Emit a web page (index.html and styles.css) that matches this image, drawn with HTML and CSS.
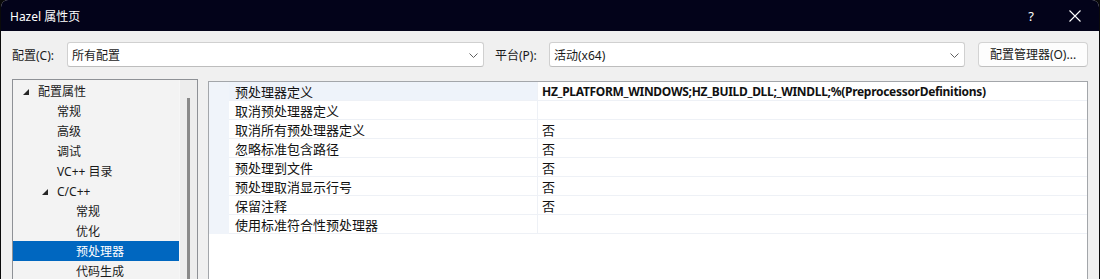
FILE: index.html
```html
<!DOCTYPE html>
<html lang="zh-CN">
<head>
<meta charset="utf-8">
<title>Hazel 属性页</title>
<link rel="stylesheet" href="styles.css">
</head>
<body>
<div class="window">
  <div class="titlebar">
    <span class="title">Hazel 属性页</span>
    <span class="tb-help">?</span>
    <span class="tb-close">
      <svg width="12" height="12" viewBox="0 0 12 12"><path d="M0.5 0.5 L11.5 11.5 M11.5 0.5 L0.5 11.5" stroke="#ffffff" stroke-width="1.1" fill="none"/></svg>
    </span>
  </div>

  <div class="toolbar">
    <span class="label lbl-config">配置(C):</span>
    <div class="combo combo-config">
      <span class="combo-text">所有配置</span>
      <svg class="chev" width="9" height="5" viewBox="0 0 9 5"><path d="M0.5 0.5 L4.5 4.5 L8.5 0.5" stroke="#606060" stroke-width="1" fill="none"/></svg>
    </div>
    <span class="label lbl-platform">平台(P):</span>
    <div class="combo combo-platform">
      <span class="combo-text">活动(x64)</span>
      <svg class="chev" width="9" height="5" viewBox="0 0 9 5"><path d="M0.5 0.5 L4.5 4.5 L8.5 0.5" stroke="#606060" stroke-width="1" fill="none"/></svg>
    </div>
    <button class="btn">配置管理器(O)...</button>
  </div>

  <div class="main">
    <div class="tree">
      <div class="tree-list">
        <div class="node lvl1"><svg class="tri" width="6" height="6" viewBox="0 0 6 6"><polygon points="6,0 6,6 0,6" fill="#262626"/></svg><span>配置属性</span></div>
        <div class="node lvl2"><span>常规</span></div>
        <div class="node lvl2"><span>高级</span></div>
        <div class="node lvl2"><span>调试</span></div>
        <div class="node lvl2"><span>VC++ 目录</span></div>
        <div class="node lvl2 has-tri"><svg class="tri" width="6" height="6" viewBox="0 0 6 6"><polygon points="6,0 6,6 0,6" fill="#262626"/></svg><span>C/C++</span></div>
        <div class="node lvl3"><span>常规</span></div>
        <div class="node lvl3"><span>优化</span></div>
        <div class="node lvl3 selected"><span>预处理器</span></div>
        <div class="node lvl3"><span>代码生成</span></div>
      </div>
      <div class="tree-scroll"><div class="thumb"></div></div>
    </div>

    <div class="grid">
      <div class="row active"><div class="gutter"></div><div class="name">预处理器定义</div><div class="value bold">HZ_PLATFORM_WINDOWS;HZ_BUILD_DLL;_WINDLL;%(PreprocessorDefinitions)</div></div>
      <div class="row"><div class="gutter"></div><div class="name">取消预处理器定义</div><div class="value"></div></div>
      <div class="row"><div class="gutter"></div><div class="name">取消所有预处理器定义</div><div class="value">否</div></div>
      <div class="row"><div class="gutter"></div><div class="name">忽略标准包含路径</div><div class="value">否</div></div>
      <div class="row"><div class="gutter"></div><div class="name">预处理到文件</div><div class="value">否</div></div>
      <div class="row"><div class="gutter"></div><div class="name">预处理取消显示行号</div><div class="value">否</div></div>
      <div class="row"><div class="gutter"></div><div class="name">保留注释</div><div class="value">否</div></div>
      <div class="row"><div class="gutter"></div><div class="name">使用标准符合性预处理器</div><div class="value"></div></div>
    </div>
  </div>
</div>
</body>
</html>
```

FILE: styles.css
```css
* { box-sizing: border-box; }

html, body {
  margin: 0;
  padding: 0;
  background: #0a0a0a;
}

body {
  width: 1100px;
  height: 279px;
  overflow: hidden;
  font-family: "Noto Sans", "Noto Sans CJK SC", sans-serif;
  font-size: 12px;
  color: #1a1a1a;
}

.window {
  width: 1098px;
  height: 279px;
  margin-left: 1px;
  background: #f0f0f0;
  border-radius: 7px 7px 0 0;
  overflow: hidden;
  display: flex;
  flex-direction: column;
}

.titlebar {
  height: 31px;
  flex: none;
  background: #03031a;
  display: flex;
  align-items: center;
  padding-left: 9px;
  color: #ffffff;
}

.title {
  font-size: 12px;
  flex: 1;
  padding-top: 1px;
}

.tb-help {
  font-size: 13px;
  width: 40px;
  text-align: center;
  margin-right: 1px;
}

.tb-close {
  width: 46px;
  display: flex;
  justify-content: center;
  margin-right: 1px;
}

.toolbar {
  display: flex;
  align-items: center;
  height: 25px;
  margin-top: 11px;
  padding-left: 11px;
}

.label {
  font-size: 12px;
  color: #1a1a1a;
}

.lbl-config { width: 55px; }
.lbl-platform { margin-left: 11px; width: 54px; }

.combo {
  height: 25px;
  background: #ffffff;
  border: 1px solid #d0d0d0;
  border-bottom-color: #bdbdbd;
  border-radius: 3px;
  display: flex;
  align-items: center;
  padding-left: 4px;
  padding-right: 5px;
}

.combo-config { width: 417px; }
.combo-platform { width: 416px; }

.combo-text {
  flex: 1;
  font-size: 12px;
  color: #1a1a1a;
}

.chev { margin-top: 1px; }

.btn {
  margin-left: 13px;
  width: 110px;
  height: 25px;
  margin-top: -1px;
  background: #fdfdfd;
  border: 1px solid #d3d3d3;
  border-bottom-color: #c0c0c0;
  border-radius: 4px;
  font-family: "Noto Sans", "Noto Sans CJK SC", sans-serif;
  font-size: 12px;
  color: #1a1a1a;
  padding: 0;
}

.main {
  flex: 1;
  display: flex;
  align-items: flex-start;
  margin-top: 12px;
  padding-left: 11px;
}

.tree {
  width: 186px;
  height: 220px;
  border: 1px solid #8e9196;
  display: flex;
  background: #f3f3f3;
}

.tree-list {
  width: 166px;
  padding-top: 1px;
}

.node {
  height: 20px;
  display: flex;
  align-items: center;
  font-size: 12px;
  color: #1a1a1a;
  white-space: nowrap;
}

.node.lvl1 { padding-left: 10px; }
.node.lvl2 { padding-left: 44px; }
.node.lvl2.has-tri { padding-left: 29px; }
.node.lvl3 { padding-left: 63px; }

.tri { margin-right: 9px; margin-top: 1px; }

.node.selected {
  background: #0067c0;
  color: #ffffff;
}

.tree-scroll {
  width: 18px;
  background: #ededed;
  border-left: 1px solid #f6f6f6;
  padding-left: 7px;
  padding-top: 18px;
}

.thumb {
  width: 3px;
  height: 200px;
  background: #8a8a8a;
}

.grid {
  margin-left: 10px;
  margin-top: 2px;
  width: 880px;
  height: 220px;
  border: 1px solid #a3a6aa;
  background: #ffffff;
  display: flex;
  flex-direction: column;
}

.row {
  height: 19px;
  display: flex;
  flex: none;
  font-family: "Noto Sans CJK SC", sans-serif;
  font-size: 13px;
  color: #111;
}

.gutter {
  width: 20px;
  flex: none;
  background: #f0f4fa;
}

.name {
  width: 309px;
  flex: none;
  padding-left: 6px;
  padding-top: 1px;
  line-height: 18px;
  border-bottom: 1px solid #eef1f6;
  border-right: 1px solid #eef1f6;
  white-space: nowrap;
}

.row.active .name { background: #eef3fa; }

.value {
  flex: 1;
  padding-left: 4px;
  padding-top: 1px;
  line-height: 18px;
  border-bottom: 1px solid #eef1f6;
  white-space: nowrap;
}

.value.bold {
  font-family: "Noto Sans", "Noto Sans CJK SC", sans-serif;
  font-weight: 700;
  font-size: 12px;
  letter-spacing: -0.3px;
}
```
